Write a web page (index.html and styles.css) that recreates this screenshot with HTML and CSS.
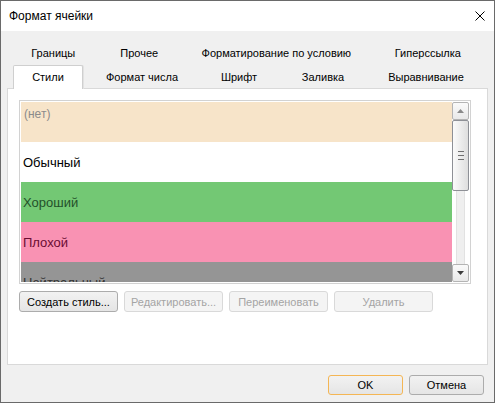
FILE: index.html
```html
<!DOCTYPE html>
<html lang="ru">
<head>
<meta charset="utf-8">
<title>Формат ячейки</title>
<link rel="stylesheet" href="styles.css">
</head>
<body>
<div class="window">
  <div class="titlebar">
    <span class="title">Формат ячейки</span>
    <svg class="close" width="10" height="10" viewBox="0 0 10 10"><path d="M0.5 0.5 L9.5 9.5 M9.5 0.5 L0.5 9.5" stroke="#000" stroke-width="1" fill="none"/></svg>
  </div>
  <div class="client">
    <div class="tabs">
      <div class="tabrow row1">
        <div class="tab w-gran">Границы</div>
        <div class="tab w-proch">Прочее</div>
        <div class="tab w-cond">Форматирование по условию</div>
        <div class="tab w-link">Гиперссылка</div>
      </div>
      <div class="tabrow row2">
        <div class="tab active w-style">Стили</div>
        <div class="tab w-num">Формат числа</div>
        <div class="tab w-font">Шрифт</div>
        <div class="tab w-fill">Заливка</div>
        <div class="tab w-align">Выравнивание</div>
      </div>
    </div>
    <div class="panel">
      <div class="list">
        <div class="items">
          <div class="item none">(нет)</div>
          <div class="item normal">Обычный</div>
          <div class="item good">Хороший</div>
          <div class="item bad">Плохой</div>
          <div class="item neutral">Нейтральный</div>
        </div>
        <div class="scrollbar">
          <div class="sb-btn">
            <svg width="7" height="4" viewBox="0 0 7 4"><path d="M0 4 L3.5 0 L7 4 Z" fill="#8a8a8a"/></svg>
          </div>
          <div class="sb-body">
            <div class="sb-thumb">
              <span class="grip"></span><span class="grip"></span><span class="grip"></span>
            </div>
            <div class="sb-track"></div>
          </div>
          <div class="sb-btn">
            <svg width="7" height="4" viewBox="0 0 7 4"><path d="M0 0 L7 0 L3.5 4 Z" fill="#3c3c3c"/></svg>
          </div>
        </div>
      </div>
      <div class="actions">
        <button class="btn">Создать стиль...</button>
        <button class="btn" disabled>Редактировать...</button>
        <button class="btn" disabled>Переименовать</button>
        <button class="btn" disabled>Удалить</button>
      </div>
    </div>
    <div class="footer">
      <button class="btn dlg default">OK</button>
      <button class="btn dlg">Отмена</button>
    </div>
  </div>
</div>
</body>
</html>
```
FILE: styles.css
```css
* { box-sizing: border-box; }
html, body { margin: 0; padding: 0; }
body {
  font-family: "Liberation Sans", Arial, sans-serif;
  font-size: 11px;
  color: #000;
  background: #fff;
}
.window {
  width: 495px;
  height: 403px;
  border: 1px solid #6a6a6a;
  display: flex;
  flex-direction: column;
  background: #f0f0f0;
}
.titlebar {
  height: 30px;
  background: #fff;
  display: flex;
  align-items: center;
  justify-content: space-between;
  padding: 0 9px 0 8px;
}
.title {
  font-size: 12px;
  color: #000;
  padding-bottom: 1px;
}
.close { display: block; margin-bottom: 1px; }
.client {
  flex: 1;
  display: flex;
  flex-direction: column;
  padding: 10px 6px 0 6px;
}
.tabs { display: flex; flex-direction: column; }
.tabrow { display: flex; }
.row1 { height: 24px; padding-left: 6px; }
.row2 { height: 23px; padding-left: 6px; }
.tab {
  display: flex;
  align-items: center;
  justify-content: center;
  color: #000;
  font-size: 11px;
  white-space: nowrap;
}
.row1 .tab { padding-bottom: 1px; }
.tab.active {
  background: #fff;
  border: 1px solid #cfcfcf;
  border-bottom: none;
  border-radius: 2px 2px 0 0;
  box-shadow: 1px 0 0 #e2e2e2;
  margin-bottom: -1px;
  position: relative;
  z-index: 1;
  padding-bottom: 1px;
}
.w-gran { width: 81px; }
.w-proch { width: 92px; }
.w-cond { width: 184px; }
.w-link { width: 121px; }
.w-style { width: 70px; }
.w-num { width: 118px; }
.w-font { width: 76px; }
.w-fill { width: 92px; }
.w-align { width: 114px; }

.panel {
  height: 277px;
  background: #fff;
  border: 1px solid #d9d9d9;
  padding: 11px 16px 0 11px;
  display: flex;
  flex-direction: column;
}
.list {
  height: 184px;
  border: 1px solid #d2d2d2;
  padding: 1px;
  display: flex;
  overflow: hidden;
}
.items {
  flex: 1;
  display: flex;
  flex-direction: column;
  overflow: hidden;
}
.item {
  flex: 0 0 40px;
  height: 40px;
  display: flex;
  align-items: center;
  padding-left: 2px;
  font-size: 13px;
}
.item.none {
  align-items: flex-start;
  padding-top: 5px;
  font-size: 12px;
  color: #8b8b8b;
  background: #f7e4c9;
  padding-left: 3px;
}
.item.normal { background: #fff; color: #000; }
.item.good { background: #73c874; color: #24502a; }
.item.bad { background: #f992b3; color: #6a0c32; }
.item.neutral { background: #959595; color: #333; }

.scrollbar {
  width: 17px;
  display: flex;
  flex-direction: column;
}
.sb-btn {
  height: 18px;
  border: 1px solid #b4b4b4;
  border-radius: 2px;
  background: linear-gradient(#fafafa, #e9e9e9);
  display: flex;
  align-items: center;
  justify-content: center;
}
.sb-btn svg { display: block; }
.sb-body {
  flex: 1;
  display: flex;
  flex-direction: column;
  align-items: center;
}
.sb-thumb {
  width: 17px;
  height: 71px;
  border: 1px solid #8e9096;
  border-radius: 2px;
  background: linear-gradient(90deg, #fbfbfb, #dedede);
  display: flex;
  flex-direction: column;
  align-items: center;
  justify-content: center;
  gap: 3px;
}
.grip {
  display: block;
  width: 6px;
  height: 1px;
  background: #6f6f6f;
}
.sb-track {
  flex: 1;
  width: 9px;
  background: #efefef;
  border-left: 1px solid #e2e2e2;
  border-right: 1px solid #e2e2e2;
}

.actions {
  display: flex;
  gap: 6px;
  margin-top: 7px;
}
.btn {
  width: 99px;
  height: 21px;
  font-family: "Liberation Sans", Arial, sans-serif;
  font-size: 11px;
  color: #000;
  border: 1px solid #acacac;
  border-radius: 3px;
  background: linear-gradient(#f2f2f2, #e5e5e5);
  padding: 0;
  margin: 0;
}
.btn:disabled {
  color: #a4a4a4;
  border-color: #d9d9d9;
  background: #f4f4f4;
}
.footer {
  display: flex;
  justify-content: flex-end;
  gap: 6px;
  padding: 10px 4px 0 0;
}
.btn.dlg { width: 75px; height: 20px; }
.btn.default { border-color: #f4b655; }
```
